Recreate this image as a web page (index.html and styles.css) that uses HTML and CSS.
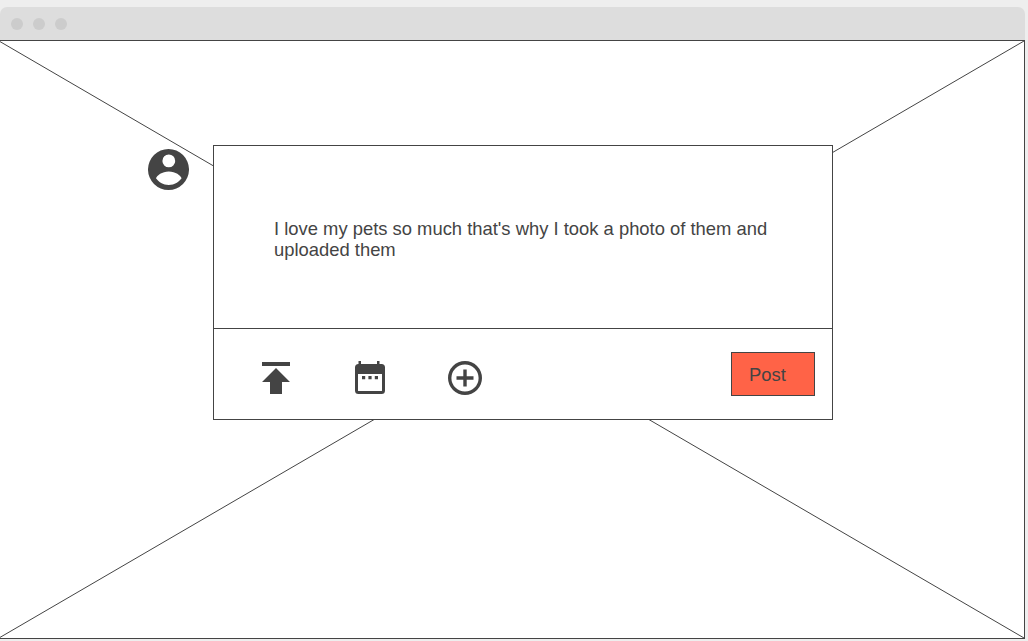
FILE: index.html
```html
<!DOCTYPE html>
<html lang="en">
<head>
<meta charset="utf-8">
<title>Post composer wireframe</title>
<link rel="stylesheet" href="styles.css">
</head>
<body>
<div class="window">
  <header class="titlebar">
    <span class="dot"></span><span class="dot"></span><span class="dot"></span>
  </header>
  <main class="canvas">
    <svg class="cross" viewBox="0 0 1026 598" preserveAspectRatio="none" aria-hidden="true">
      <line x1="0" y1="0" x2="1026" y2="598"></line>
      <line x1="1026" y1="0" x2="0" y2="598"></line>
    </svg>
    <section class="card">
      <svg class="avatar" viewBox="0 0 41 41" aria-hidden="true">
        <path fill-rule="evenodd" d="M20.500 0a20.500 20.500 0 1 0 0 41a20.500 20.500 0 1 0 0-41zM20.800 5.500a6.400 6.400 0 1 1 0 12.800a6.400 6.400 0 1 1 0-12.800zM20.800 22.500C14 22.500 9 26.500 8 29.300 10.500 33 15 36 20.800 36S31 33 33.600 29.300C32.600 26.500 27.600 22.500 20.800 22.500z"></path>
      </svg>
      <div class="message">
        <p>I love my pets so much that's why I took a photo of them and uploaded them</p>
      </div>
      <div class="actions">
        <svg class="icon icon-upload" viewBox="0 0 24 24" aria-hidden="true">
          <path d="M5 4v2h14V4H5zm0 10h4v6h6v-6h4l-7-7-7 7z"></path>
        </svg>
        <svg class="icon icon-calendar" viewBox="0 0 30 33" aria-hidden="true">
          <path fill-rule="evenodd" d="M3.500 0h2.500v3h16V0h2.500v3h2A3.500 3.500 0 0 1 30 6.500v23a3.500 3.500 0 0 1-3.500 3.500h-23A3.500 3.500 0 0 1 0 29.500v-23A3.500 3.500 0 0 1 3.500 3zM3 13v16.500a.5.5 0 0 0 .5.5h23a.5.5 0 0 0 .5-.5V13zM7 15h3.200v3.200H7zM13.400 15h3.200v3.200h-3.200zM19.800 15h3.200v3.200h-3.200z"></path>
        </svg>
        <svg class="icon icon-add" viewBox="0 0 34 34" aria-hidden="true">
          <path d="M15.300 8.500h3.400v6.800h6.800v3.400h-6.800v6.800h-3.400v-6.800H8.500v-3.400h6.800z"></path>
          <path fill-rule="evenodd" d="M17 0a17 17 0 1 0 0 34a17 17 0 1 0 0-34zM17 3.400a13.600 13.600 0 1 1 0 27.200a13.600 13.600 0 1 1 0-27.200z"></path>
        </svg>
        <button class="post" type="button">Post</button>
      </div>
    </section>
  </main>
</div>
</body>
</html>
```
FILE: styles.css
```css
* { box-sizing: border-box; }
html, body { margin: 0; height: 100%; }
body {
  background: #eeeeee;
  font-family: "Liberation Sans", Arial, sans-serif;
  overflow: hidden;
}
.window {
  width: 1025px;
  padding-top: 7px;
}
.titlebar {
  height: 33px;
  background: #dddddd;
  border-radius: 7px 7px 0 0;
  display: flex;
  align-items: center;
  gap: 10px;
  padding: 0 0 0 11px;
}
.dot {
  width: 12px;
  height: 12px;
  border-radius: 50%;
  background: #cccccc;
}
.canvas {
  position: relative;
  height: 599px;
  margin-left: -1px;
  background: #ffffff;
  border-top: 1px solid #444444;
  border-right: 1px solid #444444;
  border-bottom: 1px solid #444444;
  padding: 104px 0 0 214px;
}
.cross {
  position: absolute;
  left: 0;
  top: 0;
  width: 100%;
  height: 100%;
}
.cross line {
  stroke: #444444;
  stroke-width: 1;
  vector-effect: non-scaling-stroke;
}
.card {
  position: relative;
  width: 620px;
  height: 275px;
  background: #ffffff;
  border: 1px solid #444444;
  color: #444444;
}
.avatar {
  position: absolute;
  left: -66px;
  top: 3px;
  width: 41px;
  height: 41px;
  fill: #444444;
}
.message {
  height: 183px;
  border-bottom: 1px solid #444444;
  padding: 72px 40px 0 60px;
}
.message p {
  margin: 0;
  font-size: 18.4px;
  line-height: 21px;
}
.actions {
  display: flex;
  align-items: flex-start;
  height: 90px;
}
.icon { fill: #444444; flex: none; }
.icon-upload {
  width: 48px;
  height: 48px;
  margin: 24.500px 0 0 38px;
}
.icon-calendar {
  width: 30px;
  height: 33px;
  margin: 32px 0 0 55px;
}
.icon-add {
  width: 34px;
  height: 34px;
  margin: 32px 0 0 63px;
}
.post {
  margin: 23px 0 0 249px;
  width: 84px;
  height: 44px;
  background: #ff6347;
  border: 1px solid #444444;
  border-radius: 0;
  color: #444444;
  font: 18.4px "Liberation Sans", Arial, sans-serif;
  padding: 2px 11px 0 0;
}
```
